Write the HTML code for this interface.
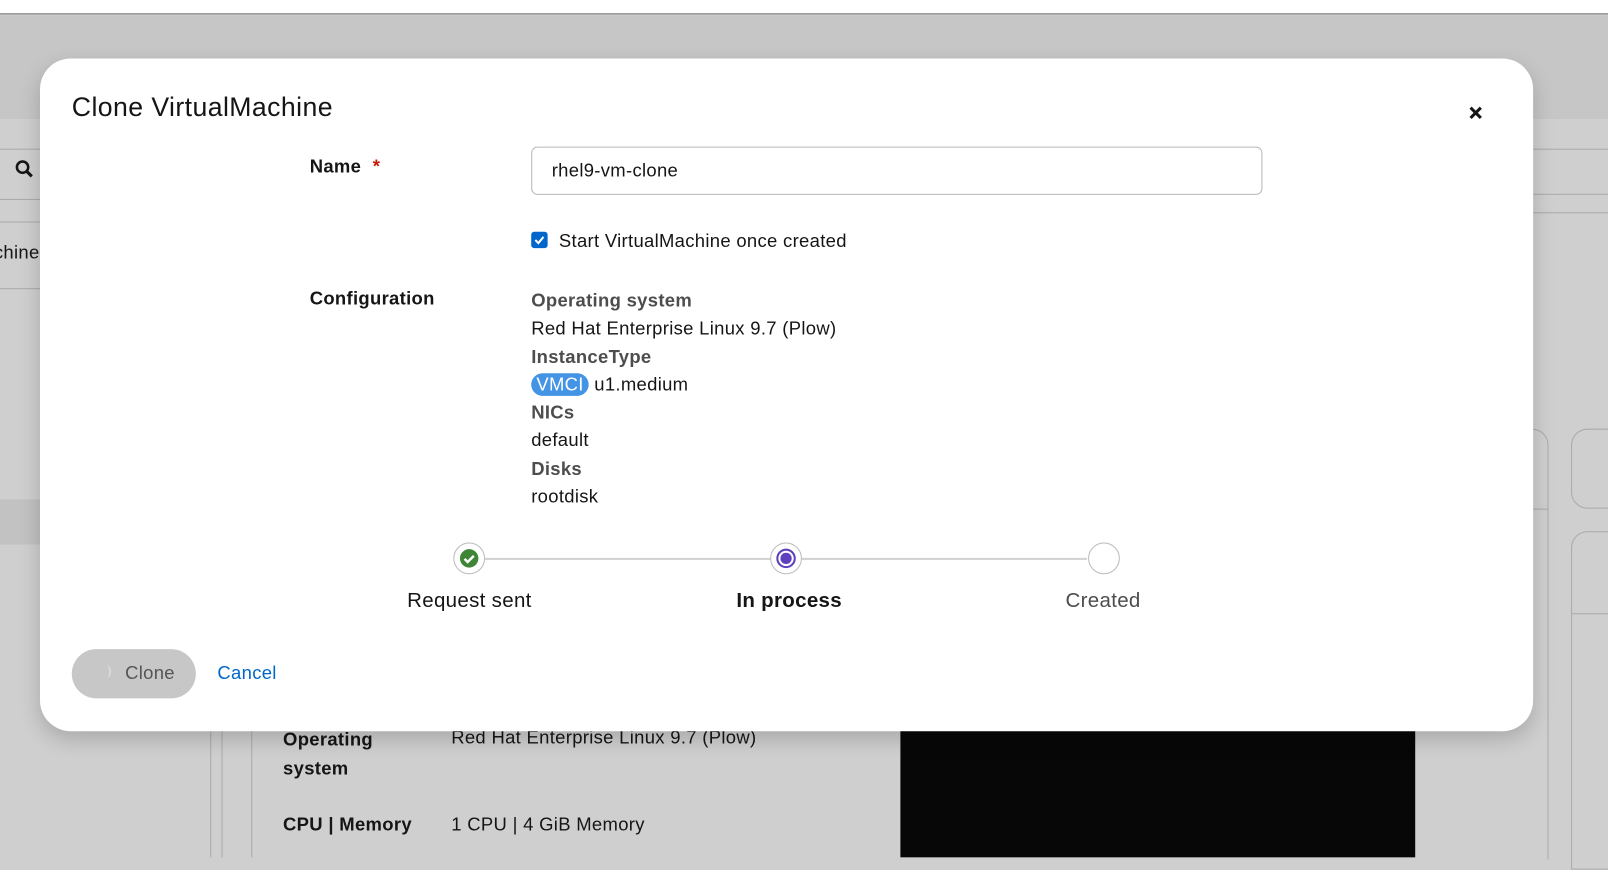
<!DOCTYPE html>
<html><head><meta charset="utf-8"><style>
*{box-sizing:border-box;margin:0;padding:0}
html,body{width:1608px;height:836px;overflow:hidden;background:#cfcfcf}
#w{position:absolute;left:0;top:0;width:1568px;height:816px;transform:scale(1.02551);transform-origin:0 0;font-family:"Liberation Sans",sans-serif;color:#151515}
.a{position:absolute}
.t{font-size:18px;white-space:nowrap;letter-spacing:0.3px}
.b{font-weight:bold}
.g{color:#4d4d4d}
</style></head><body><div id="w">
<div class="a" style="left:0;top:0;width:1568px;height:14px;background:#fff;border-bottom:1px solid #6a6a6a"></div>
<div class="a" style="left:0;top:15px;width:1568px;height:101px;background:#c6c6c6"></div>
<div class="a" style="left:0;top:145px;width:40px;height:1px;background:#aaa"></div>
<div class="a" style="left:0;top:194px;width:40px;height:1px;background:#aaa"></div>
<div class="a" style="left:0;top:216px;width:40px;height:1px;background:#aaa"></div>
<div class="a" style="left:0;top:281px;width:40px;height:1px;background:#aaa"></div>
<div class="a" style="left:0;top:487px;width:40px;height:44px;background:#c2c2c2"></div>
<div class="a t" style="left:-6px;top:236px">chines</div>
<svg class="a" style="left:14px;top:155px" width="20" height="20" viewBox="0 0 20 20"><circle cx="8" cy="8" r="5.5" fill="none" stroke="#151515" stroke-width="2.5"/><path d="M12 12l5 5" stroke="#151515" stroke-width="3"/></svg>
<div class="a" style="left:1495px;top:145px;width:80px;height:1px;background:#aaa"></div>
<div class="a" style="left:1495px;top:189px;width:80px;height:1px;background:#aaa"></div>
<div class="a" style="left:1495px;top:207px;width:80px;height:1px;background:#aaa"></div>
<div class="a" style="left:1440px;top:418px;width:70px;height:420px;border:1px solid #aaa;border-left:none;border-bottom:none;border-radius:0 16px 0 0"></div>
<div class="a" style="left:1440px;top:496px;width:70px;height:1px;background:#aaa"></div>
<div class="a" style="left:1532px;top:418px;width:100px;height:78px;border:1px solid #aaa;border-radius:16px"></div>
<div class="a" style="left:1532px;top:518px;width:100px;height:330px;border:1px solid #aaa;border-radius:16px 0 0 0"></div>
<div class="a" style="left:1532px;top:598px;width:80px;height:1px;background:#aaa"></div>
<div class="a" style="left:205px;top:712px;width:1px;height:124px;background:#aaa"></div>
<div class="a" style="left:216px;top:712px;width:1px;height:124px;background:#aaa"></div>
<div class="a" style="left:245px;top:712px;width:1px;height:124px;background:#aaa"></div>
<div class="a t b" style="left:276px;top:707px;line-height:28px">Operating<br>system</div>
<div class="a t" style="left:440px;top:709px">Red Hat Enterprise Linux 9.7 (Plow)</div>
<div class="a t b" style="left:276px;top:794px">CPU | Memory</div>
<div class="a t" style="left:440px;top:794px">1 CPU | 4 GiB Memory</div>
<div class="a" style="left:878px;top:712px;width:502px;height:124px;background:#070707"></div>

<div class="a" style="left:39px;top:57px;width:1456px;height:656px;background:#fff;border-radius:30px;box-shadow:0 8px 20px rgba(0,0,0,.18)"></div>
<div class="a" style="left:70px;top:89px;font-size:26px;letter-spacing:0.4px">Clone VirtualMachine</div>
<svg class="a" style="left:1432px;top:103px" width="14" height="14" viewBox="0 0 14 14"><path d="M2 2l10 10M12 2L2 12" stroke="#151515" stroke-width="3"/></svg>
<div class="a t b" style="left:302px;top:152px">Name <span style="color:#c9190b;margin-left:6px">*</span></div>
<div class="a" style="left:518px;top:143px;width:713px;height:47px;border:1px solid #b8b8b8;border-radius:6px"></div>
<div class="a t" style="left:538px;top:156px">rhel9-vm-clone</div>
<div class="a" style="left:518px;top:226px;width:16px;height:16px;background:#0066cc;border-radius:3px"></div>
<svg class="a" style="left:518px;top:226px" width="16" height="16"><path d="M4 8l3 3 5-6" stroke="#fff" stroke-width="2" fill="none"/></svg>
<div class="a t" style="left:545px;top:225px">Start VirtualMachine once created</div>
<div class="a t b" style="left:302px;top:281px">Configuration</div>
<div class="a t" style="left:518px;top:280px;line-height:27.3px">
<div class="b g">Operating system</div>
<div>Red Hat Enterprise Linux 9.7 (Plow)</div>
<div class="b g">InstanceType</div>
<div><span style="background:#4394e5;color:#fff;border-radius:14px;padding:1px 5px">VMCI</span> u1.medium</div>
<div class="b g">NICs</div>
<div>default</div>
<div class="b g">Disks</div>
<div>rootdisk</div>
</div>
<div class="a" style="left:473px;top:544px;width:587px;height:2px;background:#d2d2d2"></div>
<div class="a" style="left:442px;top:529px;width:31px;height:31px;border:1px solid #bbb;border-radius:50%;background:#fff"></div>
<svg class="a" style="left:448px;top:535px" width="19" height="19"><circle cx="9.5" cy="9.5" r="9" fill="#3e8635"/><path d="M5 10l3 3 6-6" stroke="#fff" stroke-width="2.4" fill="none"/></svg>
<div class="a" style="left:751px;top:529px;width:31px;height:31px;border:1px solid #bbb;border-radius:50%;background:#fff"></div>
<div class="a" style="left:757px;top:535px;width:19px;height:19px;border:2.5px solid #5e40be;border-radius:50%"></div>
<div class="a" style="left:761px;top:539px;width:11px;height:11px;background:#5e40be;border-radius:50%"></div>
<div class="a" style="left:1061px;top:529px;width:31px;height:31px;border:1px solid #bbb;border-radius:50%;background:#fff"></div>
<div class="a t" style="left:397px;top:575px;font-size:20px">Request sent</div>
<div class="a t b" style="left:718px;top:575px;font-size:20px">In process</div>
<div class="a t" style="left:1039px;top:575px;font-size:20px;color:#4d4d4d">Created</div>
<div class="a" style="left:70px;top:633px;width:121px;height:48px;background:#c7c7c7;border-radius:24px"></div>
<div class="a" style="left:100px;top:649px;width:8px;height:12px;border-right:1.5px solid #eee;border-radius:50%"></div>
<div class="a t" style="left:122px;top:646px;color:#555">Clone</div>
<div class="a t" style="left:212px;top:646px;color:#0066cc">Cancel</div>
</div></body></html>
